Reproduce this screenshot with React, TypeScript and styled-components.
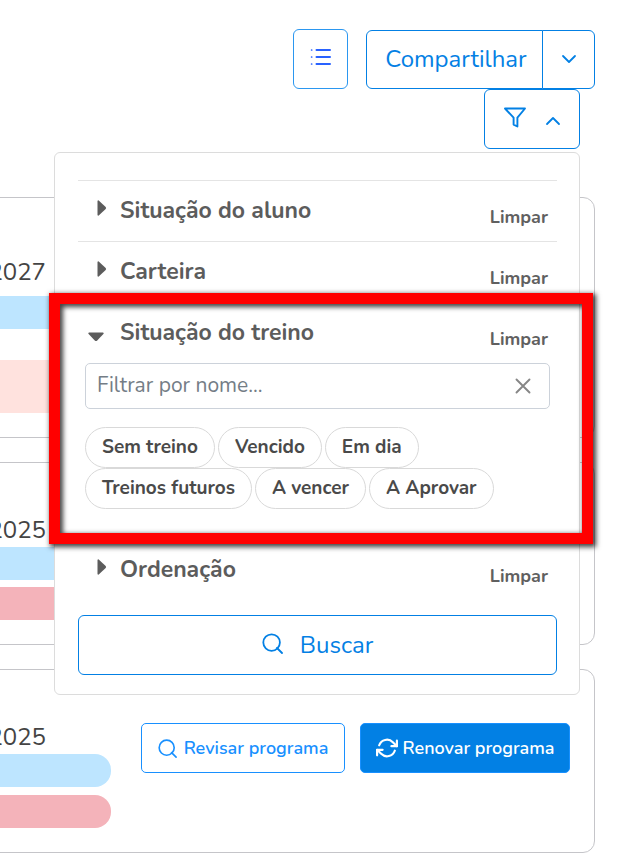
import React, { useState } from "react";
import styled, { createGlobalStyle, css } from "styled-components";

const GlobalStyle = createGlobalStyle`
  *, *::before, *::after { box-sizing: border-box; }
  body {
    margin: 0;
    background: #fff;
    color: #444;
    font-family: Nunito, Lato, "Open Sans", sans-serif;
  }
  button, input { font-family: inherit; margin: 0; }
  button { cursor: pointer; }
`;

const Page = styled.main`
  overflow: hidden;
  padding-right: 22px;
`;

const Toolbar = styled.header`
  display: flex;
  justify-content: flex-end;
  align-items: flex-end;
  gap: 18px;
  padding-top: 29px;
`;

const outlined = css`
  display: flex;
  align-items: center;
  justify-content: center;
  background: #fff;
  border: 1px solid #0380e4;
  border-radius: 6px;
  color: #0380e4;
`;

const ListButton = styled.button`
  ${outlined}
  width: 55px;
  height: 60px;
  padding: 0 0 4px;
  border-color: #2b97f0;
  color: #2962ff;
`;

const Split = styled.div`
  display: flex;
  height: 59px;
`;

const ShareButton = styled.button`
  ${outlined}
  width: 177px;
  padding: 0 0 1px 3px;
  font-size: 24px;
  border-radius: 6px 0 0 6px;
`;

const ShareToggle = styled.button`
  ${outlined}
  width: 53px;
  margin-left: -1px;
  padding: 0 0 2px;
  border-radius: 0 6px 6px 0;
`;

const FilterRow = styled.div`
  position: relative;
  z-index: 1;
  display: flex;
  justify-content: flex-end;
  padding-right: 15px;
`;

const FilterButton = styled.button`
  ${outlined}
  width: 96px;
  height: 60px;
  gap: 19px;
  padding: 0 0 0 1px;

  svg:first-child { margin-bottom: 4px; }
  svg:last-child { margin-top: 3px; }
`;

const FilterMenu = styled.section`
  position: absolute;
  top: 63px;
  right: 15px;
  width: 526px;
  padding: 27px 22px 19px 23px;
  background: #fff;
  border: 1px solid #dcdcdc;
  border-radius: 6px;
`;

const Group = styled.div<{ $marked?: boolean }>`
  position: relative;
  border-top: 1px solid #e4e4e4;

  ${(p) =>
    p.$marked &&
    css`
      z-index: 1;
      padding-bottom: 30px;

      &::after {
        content: "";
        position: absolute;
        inset: -10px -36px -5px -29px;
        border: 11px solid #f00;
        box-shadow: 2px 2px 5px 1px rgba(0, 0, 0, 0.75),
          inset 2px 2px 5px 1px rgba(0, 0, 0, 0.75);
        pointer-events: none;
      }
    `}
`;

const GroupHeader = styled.div`
  display: flex;
  align-items: center;
  justify-content: space-between;
  height: 60px;
  padding-right: 9px;
`;

const GroupTitle = styled.button`
  display: flex;
  align-items: center;
  padding: 0;
  border: 0;
  background: none;
  color: #5c5c5c;
  font-size: 23px;
  font-weight: 700;
  line-height: 32px;
`;

const Marker = styled.span<{ $open?: boolean }>`
  display: flex;
  width: 42px;
  padding-left: ${(p) => (p.$open ? 10 : 19)}px;
  padding-top: ${(p) => (p.$open ? 8 : 0)}px;
  padding-bottom: ${(p) => (p.$open ? 0 : 6)}px;
`;

const ClearButton = styled.button`
  padding: 12px 0 0;
  border: 0;
  background: none;
  color: #606060;
  font-size: 18px;
  font-weight: 700;
  line-height: 24px;
`;

const GroupBody = styled.div`
  padding: 0 7px;
`;

const SearchBox = styled.div`
  display: flex;
  align-items: center;
  height: 46px;
  padding: 0 18px 0 11px;
  border: 1px solid #ccd2da;
  border-radius: 5px;
`;

const SearchInput = styled.input`
  flex: 1;
  min-width: 0;
  height: 40px;
  padding: 0 0 2px;
  border: 0;
  outline: 0;
  background: none;
  color: #444;
  font-size: 21px;

  &::placeholder { color: #747d86; opacity: 1; }
`;

const IconButton = styled.button`
  display: flex;
  padding: 0;
  border: 0;
  background: none;
  color: #868686;
`;

const Chips = styled.div`
  display: flex;
  flex-wrap: wrap;
  column-gap: 3px;
  margin-top: 18px;
`;

const Chip = styled.button`
  height: 41px;
  padding: 0 16px 2px;
  border: 1px solid #d9d9d9;
  border-radius: 21px;
  background: #fff;
  color: #4a4a4a;
  font-size: 19px;
  font-weight: 700;
`;

const SearchButton = styled.button`
  ${outlined}
  width: 100%;
  height: 60px;
  margin-top: 15px;
  gap: 17px;
  padding: 0;
  font-size: 24px;

  svg { margin-bottom: 4px; }
`;

const Cards = styled.div`
  display: grid;
  gap: 24px;
  margin: 48px 0 0 -50px;
`;

const Card = styled.article<{ $height: number; $top: number }>`
  display: flex;
  justify-content: space-between;
  align-items: flex-start;
  min-height: ${(p) => p.$height}px;
  padding: ${(p) => p.$top}px 24px 0 14px;
  border: 1px solid #c5c5c9;
  border-radius: 12px;
`;

const Program = styled.div`
  display: grid;
  width: 146px;
`;

const Year = styled.span`
  padding-right: 65px;
  font-size: 24px;
  line-height: 28px;
  text-align: right;
`;

const Bar = styled.div<{ $color: string; $gap: number; $height?: number }>`
  height: ${(p) => p.$height ?? 33}px;
  margin-top: ${(p) => p.$gap}px;
  border-radius: 16px;
  background: ${(p) => p.$color};
`;

const Actions = styled.div`
  display: flex;
  gap: 15px;
`;

const ActionButton = styled.button<{ $primary?: boolean }>`
  display: flex;
  align-items: center;
  justify-content: center;
  width: ${(p) => (p.$primary ? 210 : 204)}px;
  height: 50px;
  padding: 0;
  gap: ${(p) => (p.$primary ? 5 : 7)}px;
  border: 1px solid #1890ff;
  border-radius: 5px;
  background: ${(p) => (p.$primary ? "#0280e4" : "#fff")};
  color: ${(p) => (p.$primary ? "#fff" : "#1890ff")};
  font-size: 18px;
  font-weight: 600;
  white-space: nowrap;
`;

const stroke = {
  fill: "none",
  stroke: "currentColor",
  strokeLinecap: "round" as const,
  strokeLinejoin: "round" as const,
  "aria-hidden": true,
};

const ListIcon = () => (
  <svg width="22" height="18" viewBox="0 0 22 18" {...stroke} strokeWidth="2">
    <path d="M6.5 2H20M6.5 9H20M6.5 16H20" />
    <path d="M1.6 2h.1M1.6 9h.1M1.6 16h.1" strokeWidth="1.7" />
  </svg>
);

const Chevron = ({ up = false }: { up?: boolean }) => (
  <svg width="16" height="10" viewBox="0 0 16 10" {...stroke} strokeWidth="1.8">
    <path d={up ? "M2 8l6-6 6 6" : "M2 2l6 6 6-6"} />
  </svg>
);

const FunnelIcon = () => (
  <svg width="22" height="21" viewBox="0 0 22 21" {...stroke} strokeWidth="1.9">
    <path d="M1 1.5h20l-7.6 9.2v8.8l-3.8-1.9v-6.9z" />
  </svg>
);

const MagnifierIcon = ({ size = 21 }: { size?: number }) => (
  <svg width={size} height={size} viewBox="0 0 21 21" {...stroke} strokeWidth="1.8">
    <circle cx="9.6" cy="9.6" r="8.3" />
    <path d="M15 15l5 5" />
  </svg>
);

const RefreshIcon = () => (
  <svg width="22" height="22" viewBox="0 0 24 24" {...stroke} strokeWidth="2.4">
    <path d="M22.8 4v6h-6M1.2 20v-6h6" />
    <path d="M3.51 9a9 9 0 0 1 14.85-3.36L22.8 10M1.2 14l4.44 4.36A9 9 0 0 0 20.49 15" />
  </svg>
);

const CrossIcon = () => (
  <svg width="16" height="16" viewBox="0 0 16 16" {...stroke} strokeWidth="1.9">
    <path d="M1.5 1.5l13 13M14.5 1.5l-13 13" />
  </svg>
);

const Caret = ({ open = false }: { open?: boolean }) =>
  open ? (
    <svg width="16" height="10" viewBox="0 0 16 10" fill="currentColor" aria-hidden>
      <path d="M1 .5h14q1 .3.6 1.2L9 8.7q-1 .8-2 0L.4 1.7Q0 .8 1 .5z" />
    </svg>
  ) : (
    <svg width="10" height="16" viewBox="0 0 10 16" fill="currentColor" aria-hidden>
      <path d="M.5 1v14q.3 1 1.2.6L8.7 9q.8-1 0-2L1.7.4Q.8 0 .5 1z" />
    </svg>
  );

interface GroupProps {
  title: string;
  marked?: boolean;
  children?: React.ReactNode;
}

function FilterGroup({ title, marked, children }: GroupProps) {
  const [open, setOpen] = useState(Boolean(children));
  return (
    <Group $marked={marked}>
      <GroupHeader>
        <GroupTitle type="button" aria-expanded={open} onClick={() => setOpen(!open)}>
          <Marker $open={open}>
            <Caret open={open} />
          </Marker>
          {title}
        </GroupTitle>
        <ClearButton type="button">Limpar</ClearButton>
      </GroupHeader>
      {open && children}
    </Group>
  );
}

const situations = ["Sem treino", "Vencido", "Em dia", "Treinos futuros", "A vencer", "A Aprovar"];

export default function App() {
  const [query, setQuery] = useState("");

  return (
    <>
      <GlobalStyle />
      <Page>
        <Toolbar>
          <ListButton type="button" aria-label="Lista">
            <ListIcon />
          </ListButton>
          <Split>
            <ShareButton type="button">Compartilhar</ShareButton>
            <ShareToggle type="button" aria-label="Mais opções">
              <Chevron />
            </ShareToggle>
          </Split>
        </Toolbar>

        <FilterRow>
          <FilterButton type="button" aria-label="Filtros" aria-expanded>
            <FunnelIcon />
            <Chevron up />
          </FilterButton>
          <FilterMenu>
            <FilterGroup title="Situação do aluno" />
            <FilterGroup title="Carteira" />
            <FilterGroup title="Situação do treino" marked>
              <GroupBody>
                <SearchBox>
                  <SearchInput
                    type="text"
                    aria-label="Filtrar por nome"
                    placeholder="Filtrar por nome..."
                    value={query}
                    onChange={(e) => setQuery(e.target.value)}
                  />
                  <IconButton type="button" aria-label="Apagar" onClick={() => setQuery("")}>
                    <CrossIcon />
                  </IconButton>
                </SearchBox>
                <Chips>
                  {situations.map((name) => (
                    <Chip key={name} type="button">
                      {name}
                    </Chip>
                  ))}
                </Chips>
              </GroupBody>
            </FilterGroup>
            <FilterGroup title="Ordenação" />
            <SearchButton type="button">
              <MagnifierIcon />
              Buscar
            </SearchButton>
          </FilterMenu>
        </FilterRow>

        <Cards>
          <Card $height={241} $top={60}>
            <Program>
              <Year>2027</Year>
              <Bar $color="#bde5ff" $gap={10} />
              <Bar $color="#ffe2de" $gap={31} $height={53} />
            </Program>
          </Card>
          <Card $height={183} $top={53}>
            <Program>
              <Year>2025</Year>
              <Bar $color="#bde5ff" $gap={3} />
              <Bar $color="#f4b3ba" $gap={7} />
            </Program>
          </Card>
          <Card $height={184} $top={53}>
            <Program>
              <Year>2025</Year>
              <Bar $color="#bde5ff" $gap={3} />
              <Bar $color="#f4b3ba" $gap={8} />
            </Program>
            <Actions>
              <ActionButton type="button">
                <MagnifierIcon size={19} />
                Revisar programa
              </ActionButton>
              <ActionButton type="button" $primary>
                <RefreshIcon />
                Renovar programa
              </ActionButton>
            </Actions>
          </Card>
        </Cards>
      </Page>
    </>
  );
}
